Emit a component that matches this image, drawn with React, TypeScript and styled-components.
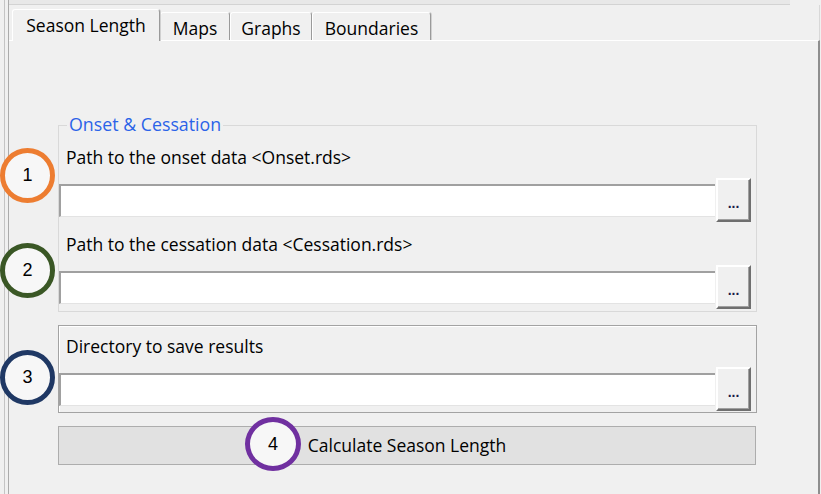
import React from "react";
import styled, { createGlobalStyle } from "styled-components";

const Global = createGlobalStyle`
  html, body { margin: 0; padding: 0; background: #f0f0f0; }
  body { font-family: "Open Sans", "Noto Sans", sans-serif; }
  #root { width: 821px; height: 494px; }
`;

const Window = styled.div`
  position: relative;
  width: 821px;
  height: 494px;
  overflow: hidden;
  background: #f0f0f0;
  box-sizing: border-box;
  padding-left: 4px;
  display: flex;
`;

const Frame = styled.div`
  flex: 1;
  display: flex;
  border-left: 1px solid #c4c4c4;
  padding-left: 3px;
`;

const Body = styled.div`
  flex: 1;
  display: flex;
  flex-direction: column;
  border-left: 1px solid #ababab;
`;

const TopStrip = styled.div`
  height: 4px;
  background: #e8e8e8;
  border-bottom: 1px solid #d3d3d3;
  margin-right: 31px;
`;

const TabBar = styled.div`
  height: 35px;
  display: flex;
  align-items: flex-end;
  padding-left: 3px;
  border-right: 1px solid #d8d8d8;
  margin-right: 1px;
`;

const Tab = styled.div<{ $active?: boolean; $w: number }>`
  position: relative;
  z-index: ${(p) => (p.$active ? 2 : 1)};
  box-sizing: border-box;
  width: ${(p) => p.$w}px;
  height: ${(p) => (p.$active ? 32 : 28)}px;
  margin-bottom: ${(p) => (p.$active ? -1 : 0)}px;
  background: #f0f0f0;
  border-top: 1px solid #ffffff;
  border-left: 1px solid #ffffff;
  border-right: 1px solid #9a9a9a;
  box-shadow: 1px 0 0 #d0d0d0;
  border-radius: 3px 3px 0 0;
  display: flex;
  justify-content: center;
  padding-top: 4px;
  font-size: 17.5px;
  line-height: 22px;
  color: #000;
  white-space: nowrap;
`;

const Panel = styled.div`
  flex: 1;
  display: flex;
  flex-direction: column;
  border-top: 1px solid #ffffff;
  border-right: 2px solid #8e8e8e;
  margin-right: 1px;
  padding-left: 49px;
`;

const Group = styled.div<{ $tone: "light" | "dark"; $top: number; $pt: number; $pb: number }>`
  position: relative;
  box-sizing: border-box;
  width: 699px;
  margin-top: ${(p) => p.$top}px;
  padding: ${(p) => p.$pt}px 5px ${(p) => p.$pb}px 0;
  border: 1px solid ${(p) => (p.$tone === "light" ? "#d9d9d9" : "#a3a3a3")};
  box-shadow: ${(p) => (p.$tone === "light" ? "none" : "inset 1px 1px 0 #ffffff")};
  display: flex;
  flex-direction: column;
  gap: 12px;
`;

const Legend = styled.span`
  position: absolute;
  left: 8px;
  top: -13px;
  padding: 0 2px;
  background: #f0f0f0;
  color: #2b63e8;
  font-size: 17.8px;
  line-height: 22px;
  white-space: nowrap;
`;

const Field = styled.div`
  display: flex;
  flex-direction: column;
  gap: 11px;
`;

const Label = styled.div`
  padding-left: 7px;
  font-size: 17.5px;
  line-height: 20px;
  color: #000;
  white-space: nowrap;
`;

const Row = styled.div`
  display: flex;
  align-items: center;
  height: 44px;
`;

const TextBox = styled.div`
  box-sizing: border-box;
  width: 656px;
  height: 33px;
  background: #ffffff;
  border-top: 2px solid #a0a0a0;
  border-left: 2px solid #a0a0a0;
  border-bottom: 1px solid #e3e3e3;
`;

const Browse = styled.div`
  box-sizing: border-box;
  width: 35px;
  height: 44px;
  margin-left: 1px;
  background: #f0f0f0;
  border-top: 2px solid #ffffff;
  border-left: 2px solid #ffffff;
  border-right: 2px solid #6f6f6f;
  border-bottom: 2px solid #6f6f6f;
  box-shadow: inset -1px -1px 0 #a0a0a0;
  display: flex;
  align-items: center;
  justify-content: center;
  padding-top: 6px;
  font-family: "Liberation Sans", sans-serif;
  font-size: 14px;
  font-weight: bold;
  letter-spacing: 0px;
  color: #1b1b4a;
`;

const CalcButton = styled.div`
  box-sizing: border-box;
  width: 698px;
  height: 39px;
  margin-top: 13px;
  background: #e1e1e1;
  border: 1px solid #adadad;
  display: flex;
  align-items: center;
  justify-content: center;
  padding-bottom: 2px;
  font-size: 17.5px;
  color: #000;
  white-space: nowrap;
`;

const Marker = styled.div<{ $color: string; $x: number; $y: number; $w?: number; $h?: number }>`
  position: absolute;
  left: ${(p) => p.$x}px;
  top: ${(p) => p.$y}px;
  width: ${(p) => p.$w ?? 55}px;
  height: ${(p) => p.$h ?? 55}px;
  box-sizing: border-box;
  border: 5px solid ${(p) => p.$color};
  border-radius: 50%;
  background: #f7f7f7;
  display: flex;
  align-items: center;
  justify-content: center;
  font-family: "Liberation Sans", sans-serif;
  font-size: 18px;
  color: #000;
  z-index: 5;
`;

export default function App() {
  return (
    <>
      <Global />
      <Window>
        <Frame>
          <Body>
            <TopStrip />
            <TabBar>
              <Tab $active $w={148}>Season Length</Tab>
              <Tab $w={70}>Maps</Tab>
              <Tab $w={82}>Graphs</Tab>
              <Tab $w={119}>Boundaries</Tab>
            </TabBar>
            <Panel>
              <Group $tone="light" $top={84} $pt={21} $pb={2}>
                <Legend>Onset &amp; Cessation</Legend>
                <Field>
                  <Label>Path to the onset data &lt;Onset.rds&gt;</Label>
                  <Row>
                    <TextBox />
                    <Browse>...</Browse>
                  </Row>
                </Field>
                <Field>
                  <Label>Path to the cessation data &lt;Cessation.rds&gt;</Label>
                  <Row>
                    <TextBox />
                    <Browse>...</Browse>
                  </Row>
                </Field>
              </Group>
              <Group $tone="dark" $top={13} $pt={10} $pb={1}>
                <Field>
                  <Label>Directory to save results</Label>
                  <Row>
                    <TextBox />
                    <Browse>...</Browse>
                  </Row>
                </Field>
              </Group>
              <CalcButton>Calculate Season Length</CalcButton>
            </Panel>
          </Body>
        </Frame>
        <Marker $color="#ed7d31" $x={0} $y={148}>1</Marker>
        <Marker $color="#3a5725" $x={0} $y={243}>2</Marker>
        <Marker $color="#1f3864" $x={0} $y={350}>3</Marker>
        <Marker $color="#7030a0" $x={245} $y={417} $w={56} $h={54}>4</Marker>
      </Window>
    </>
  );
}
